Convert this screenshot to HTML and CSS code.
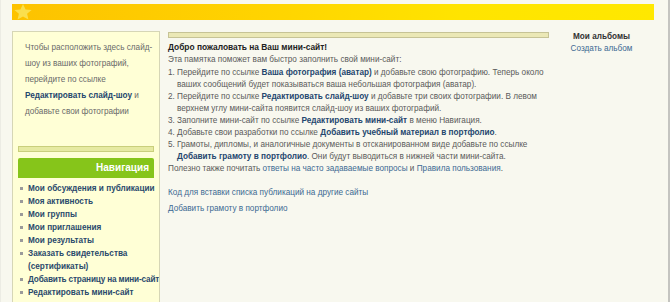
FILE: index.html
```html
<!DOCTYPE html>
<html lang="ru">
<head>
<meta charset="utf-8">
<title>Мини-сайт</title>
<link rel="stylesheet" href="styles.css">
</head>
<body>
<div class="page">
  <div class="topbar">
    <svg class="star" width="20" height="16" viewBox="0 0 20 16"><polygon points="10,0 12.6,5.4 18.6,6 14.1,9.8 15.4,15.6 10,12.6 4.6,15.6 5.9,9.8 1.4,6 7.4,5.4" fill="#f9e45a" opacity="0.85"/></svg>
  </div>
  <div class="cols">
    <aside class="left">
      <div class="slide">
        Чтобы расположить здесь слайд-шоу из ваших фотографий, перейдите по ссылке <a class="strong">Редактировать слайд-шоу</a> и добавьте свои фотографии
      </div>
      <div class="thinbar"></div>
      <div class="navhead">Навигация</div>
      <ul class="nav">
        <li>Мои обсуждения и публикации</li>
        <li>Моя активность</li>
        <li>Мои группы</li>
        <li>Мои приглашения</li>
        <li>Мои результаты</li>
        <li>Заказать свидетельства (сертификаты)</li>
        <li class="nowrap">Добавить страницу на мини-сайт</li>
        <li>Редактировать мини-сайт</li>
        <li>Помощь</li>
      </ul>
    </aside>
    <main class="main">
      <div class="mainbar"></div>
      <h1 class="title">Добро пожаловать на Ваш мини-сайт!</h1>
      <p class="intro">Эта памятка поможет вам быстро заполнить свой мини-сайт:</p>
      <ol class="steps">
        <li>Перейдите по ссылке <a class="strong">Ваша фотография (аватар)</a> и добавьте свою фотографию. Теперь около ваших сообщений будет показываться ваша небольшая фотография (аватар).</li>
        <li>Перейдите по ссылке <a class="strong">Редактировать слайд-шоу</a> и добавьте три своих фотографии. В левом верхнем углу мини-сайта появится слайд-шоу из ваших фотографий.</li>
        <li>Заполните мини-сайт по ссылке <a class="strong">Редактировать мини-сайт</a> в меню Навигация.</li>
        <li>Добавьте свои разработки по ссылке <a class="strong">Добавить учебный материал в портфолио</a>.</li>
        <li>Грамоты, дипломы, и аналогичные документы в отсканированном виде добавьте по ссылке <a class="strong">Добавить грамоту в портфолио</a>. Они будут выводиться в нижней части мини-сайта.</li>
      </ol>
      <p class="useful">Полезно также почитать <a class="plain">ответы на часто задаваемые вопросы</a> и <a class="plain">Правила пользования</a>.</p>
      <p class="extra"><a class="plain">Код для вставки списка публикаций на другие сайты</a></p>
      <p class="extra2"><a class="plain">Добавить грамоту в портфолио</a></p>
    </main>
    <aside class="right">
      <div class="albums">Мои альбомы</div>
      <a class="create">Создать альбом</a>
    </aside>
  </div>
</div>
</body>
</html>
```
FILE: styles.css
```css
html, body {
  margin: 0;
  padding: 0;
  background: #f8f8ef;
}
body {
  font-family: "Liberation Sans", Arial, sans-serif;
  font-size: 8.2px;
  color: #5a5a5a;
}
.page {
  box-sizing: border-box;
  width: 670px;
  height: 302px;
  overflow: hidden;
  padding: 4px 14px 0 11px;
  border-right: 2px solid #c4c4c0;
  border-left: 1px solid #ecece4;
}
.topbar {
  height: 16px;
  background: linear-gradient(to right, #fdc200, #ffd400 40%, #ffe400 70%, #ffe800);
  display: flex;
  align-items: center;
}
.star {
  margin-left: 1px;
  display: block;
}
.cols {
  display: flex;
  margin-top: 11px;
  align-items: flex-start;
}
.left {
  width: 148px;
  box-sizing: border-box;
  background: #ffffd6;
  border: 1px solid #d6d6b6;
  border-bottom: none;
  padding: 8px 0 0 5px;
  height: 280px;
  flex: none;
  overflow: hidden;
}
.slide {
  padding: 0 3px 0 7px;
  line-height: 16px;
  color: #6a6a6a;
  height: 98px;
}
a.strong {
  font-weight: bold;
  color: #24466e;
}
a.plain {
  color: #3d6a93;
}
.thinbar {
  height: 4px;
  background: #e6eaa2;
  border: 1px solid #c9cf7c;
  margin-top: 8px;
  margin-right: 5px;
}
.navhead {
  margin-top: 6px;
  margin-right: 5px;
  height: 20px;
  background: #86c51a;
  color: #ffffff;
  font-weight: bold;
  font-size: 10px;
  text-align: right;
  line-height: 20px;
  padding-right: 5px;
  border-radius: 2px 2px 0 0;
}
.nav {
  list-style: none;
  margin: 4px 0 0 0;
  padding: 0;
}
.nav li {
  position: relative;
  padding-left: 10px;
  font-weight: bold;
  color: #2a4a6c;
  line-height: 13px;
}
.nav li.nowrap {
  white-space: nowrap;
  letter-spacing: -0.15px;
}
.nav li::before {
  content: "";
  position: absolute;
  left: 2px;
  top: 5px;
  width: 3px;
  height: 3px;
  background: #9a9a9a;
}
.main {
  width: 381px;
  margin-left: 8px;
  flex: none;
}
.mainbar {
  height: 4px;
  margin-top: 1px;
  background: #ebe8b6;
  border: 1px solid #c6c396;
}
.title {
  margin: 3px 0 0 0;
  font-size: 8.4px;
  font-weight: bold;
  color: #222;
  line-height: 12px;
}
.intro {
  margin: 1px 0 0 0;
  line-height: 12px;
}
.steps {
  margin: 1px 0 0 0;
  padding-left: 9px;
  line-height: 12px;
}
.useful {
  margin: 0;
  line-height: 12px;
}
.extra {
  margin: 12px 0 0 0;
  line-height: 12px;
}
.extra2 {
  margin: 4px 0 0 0;
  line-height: 12px;
}
.right {
  flex: 1;
  text-align: center;
  padding-top: 0;
  line-height: 12px;
}
.albums {
  font-weight: bold;
  color: #333;
}
.create {
  color: #3d6a93;
}
```
